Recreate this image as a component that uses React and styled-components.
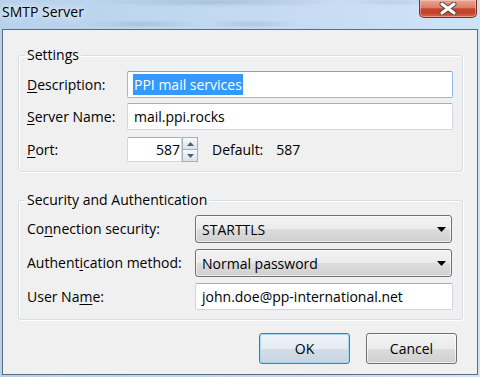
import React from 'react';
import styled, { createGlobalStyle } from 'styled-components';

const GlobalStyle = createGlobalStyle`
  html, body {
    margin: 0;
    padding: 0;
    overflow: hidden;
  }
`;

const Frame = styled.div`
  width: 480px;
  height: 377px;
  box-sizing: border-box;
  padding: 0 2px 2px;
  display: flex;
  flex-direction: column;
  background: linear-gradient(90deg, #b7d1ec 0%, #c4daf2 55%, #cfe3f8 100%);
  font-family: "Open Sans", "Noto Sans", sans-serif;
  font-size: 14px;
  color: #000;
`;

/* the glass behind the title shows blurred desktop text: drawn as soft streaks */
const TitleBar = styled.div`
  flex: none;
  height: 29px;
  display: flex;
  justify-content: space-between;
  align-items: flex-start;
  background:
    radial-gradient(ellipse 130px 5px at 215px 2px, rgba(90, 110, 140, 0.22), transparent),
    radial-gradient(ellipse 50px 4px at 390px 2px, rgba(90, 110, 140, 0.14), transparent),
    radial-gradient(ellipse 60px 4px at 140px 24px, rgba(90, 110, 140, 0.2), transparent),
    radial-gradient(ellipse 45px 4px at 250px 24px, rgba(90, 110, 140, 0.2), transparent);
`;

const Title = styled.div`
  margin-top: 3px;
  line-height: 18px;
  text-shadow: 0 0 6px rgba(255, 255, 255, 0.95), 0 0 12px rgba(255, 255, 255, 0.8);
`;

const CloseButton = styled.div`
  width: 58px;
  height: 18px;
  margin-right: 1px;
  box-sizing: border-box;
  display: flex;
  align-items: center;
  justify-content: center;
  border: 1px solid #7b2d20;
  border-top: none;
  border-radius: 0 0 5px 5px;
  background: linear-gradient(#e9a898 0%, #dc7c68 45%, #c7462f 52%, #c24129 75%, #d8684a 100%);
  box-shadow: inset 0 0 0 1px rgba(255, 220, 210, 0.45);
`;

const Client = styled.div`
  flex: 1;
  display: flex;
  flex-direction: column;
  border: 1px solid #5c6b7b;
  background: #f0f0f0;
  padding: 16px 14px 10px 15px;
`;

const Group = styled.fieldset`
  margin: ${(p) => p.$mt || 0}px 0 0;
  padding: ${(p) => p.$pt}px 9px 9px 8px;
  min-width: 0;
  border: 1px solid #d5dfe5;
  border-radius: 3px;
  box-shadow: inset 1px 1px 0 #fff, 1px 1px 0 #fff;
`;

const Legend = styled.legend`
  padding: 0 2px;
  margin-left: -2px;
  line-height: 18px;
`;

const Row = styled.div`
  display: grid;
  grid-template-columns: ${(p) => p.$label}px 1fr;
  align-items: center;
  margin-top: ${(p) => p.$mt || 0}px;
`;

const Label = styled.span`
  line-height: 18px;
  white-space: nowrap;
`;

const Key = styled.span`
  text-decoration: underline;
  text-underline-offset: 2px;
`;

const TextBox = styled.div`
  height: ${(p) => p.$h || 27}px;
  box-sizing: border-box;
  display: flex;
  align-items: center;
  padding: 0 6px;
  background: #fff;
  border: 1px solid ${(p) => (p.$focused ? '#8fbce8' : '#d2d5db')};
  border-top-color: ${(p) => (p.$focused ? '#6aa5dc' : '#abadb3')};
  border-radius: 2px;
  white-space: nowrap;
  overflow: hidden;
`;

const Selection = styled.span`
  margin-left: -1px;
  padding: 0 1px;
  line-height: 21px;
  background: #3399ff;
  color: #fff;
`;

const PortLine = styled.div`
  display: flex;
  align-items: center;
`;

const PortBox = styled(TextBox)`
  width: 55px;
  justify-content: flex-end;
  padding: 0 1px 0 4px;
  border-radius: 2px 0 0 2px;
`;

const Spinner = styled.div`
  display: flex;
  flex-direction: column;
  width: 16px;
  height: 25px;
`;

const SpinButton = styled.div`
  flex: 1;
  display: flex;
  align-items: center;
  justify-content: center;
  box-sizing: border-box;
  border: 1px solid #a9aeb6;
  background: linear-gradient(#f6f8fb, #dce2ea);
  & + & {
    border-top: none;
  }
`;

const DefaultText = styled.span`
  margin-left: ${(p) => p.$ml}px;
  line-height: 18px;
`;

const Combo = styled.div`
  height: 28px;
  margin-right: 1px;
  box-sizing: border-box;
  display: flex;
  align-items: center;
  justify-content: space-between;
  padding: 0 5px 0 6px;
  border: 1px solid #707070;
  border-radius: 3px;
  background: linear-gradient(#f3f3f3 0%, #ebebeb 50%, #dddddd 50%, #d0d0d0 100%);
  box-shadow: inset 0 0 0 1px rgba(255, 255, 255, 0.6);
`;

const ButtonBar = styled.div`
  display: flex;
  justify-content: flex-end;
  gap: 16px;
  margin-top: 13px;
  padding-right: 6px;
`;

const Button = styled.button`
  width: 91px;
  height: 31px;
  padding: 0;
  font: inherit;
  color: #000;
  border: 1px solid ${(p) => (p.$primary ? '#3c7fb1' : '#707070')};
  border-radius: 3px;
  background: ${(p) =>
    p.$primary
      ? 'linear-gradient(#eef4f8 0%, #e4ecf2 50%, #d3dee7 50%, #c8d6e1 100%)'
      : 'linear-gradient(#f3f3f3 0%, #ebebeb 50%, #dddddd 50%, #cfcfcf 100%)'};
  box-shadow: inset 0 0 0 1px ${(p) => (p.$primary ? '#a6d7f3' : 'rgba(255,255,255,0.65)')};
`;

const CloseGlyph = () => (
  <svg width="18" height="13" viewBox="0 0 18 13">
    <path d="M3 2 L15 11 M15 2 L3 11" stroke="#4a4a4a" strokeWidth="5" strokeLinecap="round" />
    <path d="M3 2 L15 11 M15 2 L3 11" stroke="#fff" strokeWidth="3" strokeLinecap="round" />
  </svg>
);

const Triangle = ({ up, color = '#4b5f85', w = 7, h = 4 }) => (
  <svg width={w} height={h} viewBox={`0 0 ${w} ${h}`}>
    <polygon points={up ? `0,${h} ${w / 2},0 ${w},${h}` : `0,0 ${w},0 ${w / 2},${h}`} fill={color} />
  </svg>
);

export default function App() {
  return (
    <>
      <GlobalStyle />
      <Frame>
        <TitleBar>
          <Title>SMTP Server</Title>
          <CloseButton>
            <CloseGlyph />
          </CloseButton>
        </TitleBar>

        <Client>
          <Group $pt={7}>
            <Legend>Settings</Legend>
            <Row $label={100}>
              <Label><Key>D</Key>escription:</Label>
              <TextBox $focused>
                <Selection>PPI mail services</Selection>
              </TextBox>
            </Row>
            <Row $label={100} $mt={5}>
              <Label><Key>S</Key>erver Name:</Label>
              <TextBox>mail.ppi.rocks</TextBox>
            </Row>
            <Row $label={100} $mt={7}>
              <Label><Key>P</Key>ort:</Label>
              <PortLine>
                <PortBox $h={25}>587</PortBox>
                <Spinner>
                  <SpinButton><Triangle up /></SpinButton>
                  <SpinButton><Triangle /></SpinButton>
                </Spinner>
                <DefaultText $ml={14}>Default:</DefaultText>
                <DefaultText $ml={13}>587</DefaultText>
              </PortLine>
            </Row>
          </Group>

          <Group $pt={6} $mt={19}>
            <Legend>Security and Authentication</Legend>
            <Row $label={168}>
              <Label>Co<Key>n</Key>nection security:</Label>
              <Combo>
                STARTTLS
                <Triangle color="#000" w={9} h={5} />
              </Combo>
            </Row>
            <Row $label={168} $mt={6}>
              <Label>Authent<Key>i</Key>cation method:</Label>
              <Combo>
                Normal password
                <Triangle color="#000" w={9} h={5} />
              </Combo>
            </Row>
            <Row $label={168} $mt={6}>
              <Label>User Na<Key>m</Key>e:</Label>
              <TextBox>john.doe@pp-international.net</TextBox>
            </Row>
          </Group>

          <ButtonBar>
            <Button $primary>OK</Button>
            <Button>Cancel</Button>
          </ButtonBar>
        </Client>
      </Frame>
    </>
  );
}
